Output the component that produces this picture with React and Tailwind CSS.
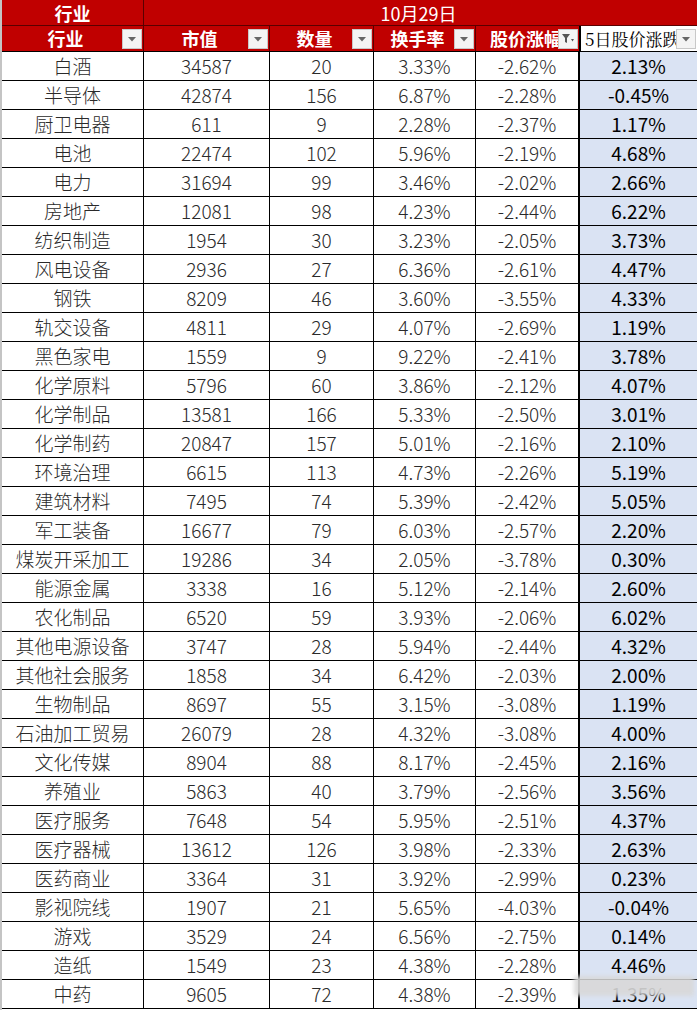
import React from "react";

const rows = [
  ["白酒", "34587", "20", "3.33%", "-2.62%", "2.13%"],
  ["半导体", "42874", "156", "6.87%", "-2.28%", "-0.45%"],
  ["厨卫电器", "611", "9", "2.28%", "-2.37%", "1.17%"],
  ["电池", "22474", "102", "5.96%", "-2.19%", "4.68%"],
  ["电力", "31694", "99", "3.46%", "-2.02%", "2.66%"],
  ["房地产", "12081", "98", "4.23%", "-2.44%", "6.22%"],
  ["纺织制造", "1954", "30", "3.23%", "-2.05%", "3.73%"],
  ["风电设备", "2936", "27", "6.36%", "-2.61%", "4.47%"],
  ["钢铁", "8209", "46", "3.60%", "-3.55%", "4.33%"],
  ["轨交设备", "4811", "29", "4.07%", "-2.69%", "1.19%"],
  ["黑色家电", "1559", "9", "9.22%", "-2.41%", "3.78%"],
  ["化学原料", "5796", "60", "3.86%", "-2.12%", "4.07%"],
  ["化学制品", "13581", "166", "5.33%", "-2.50%", "3.01%"],
  ["化学制药", "20847", "157", "5.01%", "-2.16%", "2.10%"],
  ["环境治理", "6615", "113", "4.73%", "-2.26%", "5.19%"],
  ["建筑材料", "7495", "74", "5.39%", "-2.42%", "5.05%"],
  ["军工装备", "16677", "79", "6.03%", "-2.57%", "2.20%"],
  ["煤炭开采加工", "19286", "34", "2.05%", "-3.78%", "0.30%"],
  ["能源金属", "3338", "16", "5.12%", "-2.14%", "2.60%"],
  ["农化制品", "6520", "59", "3.93%", "-2.06%", "6.02%"],
  ["其他电源设备", "3747", "28", "5.94%", "-2.44%", "4.32%"],
  ["其他社会服务", "1858", "34", "6.42%", "-2.03%", "2.00%"],
  ["生物制品", "8697", "55", "3.15%", "-3.08%", "1.19%"],
  ["石油加工贸易", "26079", "28", "4.32%", "-3.08%", "4.00%"],
  ["文化传媒", "8904", "88", "8.17%", "-2.45%", "2.16%"],
  ["养殖业", "5863", "40", "3.79%", "-2.56%", "3.56%"],
  ["医疗服务", "7648", "54", "5.95%", "-2.51%", "4.37%"],
  ["医疗器械", "13612", "126", "3.98%", "-2.33%", "2.63%"],
  ["医药商业", "3364", "31", "3.92%", "-2.99%", "0.23%"],
  ["影视院线", "1907", "21", "5.65%", "-4.03%", "-0.04%"],
  ["游戏", "3529", "24", "6.56%", "-2.75%", "0.14%"],
  ["造纸", "1549", "23", "4.38%", "-2.28%", "4.46%"],
  ["中药", "9605", "72", "4.38%", "-2.39%", "1.35%"],
];

const font = { fontFamily: '"Noto Sans CJK SC", "Noto Sans", sans-serif' };

function FilterBtn({ funnel }) {
  return (
    <span className="absolute right-[1px] top-[3px] w-[20px] h-[20px] bg-[#f4f4f4] border border-[#c8c8c8] flex items-center justify-center">
      {funnel ? (
        <svg width="14" height="12" viewBox="0 0 14 12">
          <path d="M1 1h8L6 5v5L4 9V5z" fill="#555" />
          <path d="M10 6h3l-1.5 2.5z" fill="#555" />
        </svg>
      ) : (
        <svg width="8" height="5" viewBox="0 0 8 5">
          <path d="M0 0h8L4 4.5z" fill="#666" />
        </svg>
      )}
    </span>
  );
}

export default function App() {
  const cols = "grid grid-cols-[142px_126px_104px_102px_103px_118px]";
  const headers = ["行业", "市值", "数量", "换手率"];
  return (
    <div className="w-[697px] h-[1010px] bg-white overflow-hidden relative border-l-2 border-[#c4c4c4]" style={font}>
      <div className={cols + " h-[26px] bg-[#c00000] text-white text-[18px] font-bold leading-[26px] border-b border-[#5a0000]"}>
        <div className="text-center border-r border-[#5a0000]">行业</div>
        <div className="col-span-5 text-center font-normal pr-[4px]">10月29日</div>
      </div>
      <div className={cols + " h-[26px] text-[18px] leading-[25px] border-b-2 border-black"}>
        {headers.map((h) => (
          <div key={h} className="relative bg-[#c00000] text-white font-bold text-center pr-[14px] border-r border-[#5a0000]">
            {h}
            <FilterBtn />
          </div>
        ))}
        <div className="relative bg-[#c00000] text-white font-bold pl-[14px] overflow-hidden whitespace-nowrap">
          股价涨幅
          <FilterBtn funnel />
        </div>
        <div className="relative bg-white text-black pl-[4px] overflow-hidden whitespace-nowrap border-l-2 border-black text-[17px]" style={{ fontFamily: '"Noto Serif CJK SC", "Noto Sans CJK SC", serif' }}>
          5日股价涨跌
          <FilterBtn />
        </div>
      </div>
      {rows.map((r) => (
        <div key={r[0]} className={cols + " h-[29px] text-[19px] leading-[28px]"}>
          {r.slice(0, 5).map((c, i) => (
            <div key={i} className="text-center font-light text-[#2a2a2a] border-r border-b border-black whitespace-nowrap overflow-hidden">
              {c}
            </div>
          ))}
          <div className="text-center font-normal text-black bg-[#dae3f3] border-l border-b border-black">{r[5]}</div>
        </div>
      ))}
      <div className="absolute left-[572px] top-[976px] w-[120px] h-[20px] bg-[#d9d9d9] opacity-90 blur-[2px]" />
    </div>
  );
}
